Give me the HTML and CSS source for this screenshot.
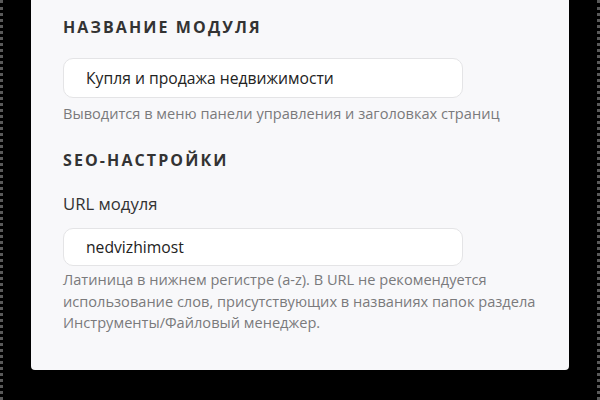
FILE: index.html
```html
<!DOCTYPE html>
<html lang="ru">
<head>
<meta charset="utf-8">
<title>Настройки модуля</title>
<link rel="stylesheet" href="styles.css">
</head>
<body>
<div class="stage">
  <section class="card">
    <h2 class="section-title">Название модуля</h2>
    <div class="field">
      <input class="text-input" type="text" value="Купля и продажа недвижимости">
      <p class="hint">Выводится в меню панели управления и заголовках страниц</p>
    </div>
    <h2 class="section-title seo">SEO-настройки</h2>
    <div class="field">
      <label class="label">URL модуля</label>
      <input class="text-input url" type="text" value="nedvizhimost">
      <p class="hint tight">Латиница в нижнем регистре (a-z). В URL не рекомендуется использование слов, присутствующих в названиях папок раздела Инструменты/Файловый менеджер.</p>
    </div>
  </section>
</div>
</body>
</html>
```
FILE: styles.css
```css
html, body {
  margin: 0;
  padding: 0;
  background: #000;
  height: 100%;
}
body {
  font-family: "Open Sans", "Noto Sans", sans-serif;
}
.stage {
  height: 400px;
  box-sizing: border-box;
  border-left: 3px dotted rgba(255,255,255,0.35);
  border-right: 3px dotted rgba(255,255,255,0.35);
  padding: 0 28px;
}
.card {
  background: #f8f8fa;
  height: 370px;
  box-sizing: border-box;
  border-radius: 0 0 4px 4px;
  padding: 17px 32px 0 32px;
  display: flex;
  flex-direction: column;
}
.section-title {
  margin: 0;
  font-size: 16px;
  line-height: 20px;
  font-weight: 700;
  letter-spacing: 2.1px;
  text-transform: uppercase;
  color: #333;
}
.section-title.seo {
  margin-top: 25px;
}
.field {
  display: flex;
  flex-direction: column;
}
.text-input {
  margin-top: 21px;
  width: 400px;
  height: 40px;
  box-sizing: border-box;
  border: 1.5px solid #e4e4e6;
  border-radius: 10px;
  background: #fff;
  padding: 0 22px;
  font-family: inherit;
  font-size: 15.7px;
  color: #222;
  outline: none;
}
.text-input.url {
  margin-top: 14.5px;
  height: 38px;
}
.label {
  margin-top: 24px;
  font-size: 16.7px;
  line-height: 20px;
  color: #333;
}
.hint {
  margin: 5px 0 0;
  font-size: 14.6px;
  line-height: 21.5px;
  color: #7a7a7c;
}
.hint.tight {
  margin-top: 3px;
}
```
